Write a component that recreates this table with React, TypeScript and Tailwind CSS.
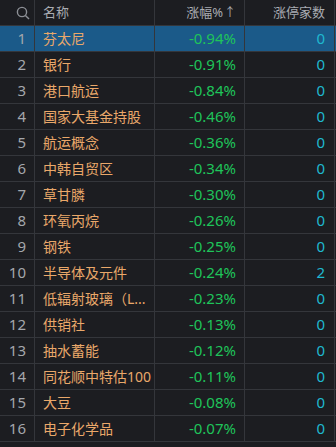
import React from "react";

const rows: [string, string, string][] = [
  ["芬太尼", "-0.94%", "0"],
  ["银行", "-0.91%", "0"],
  ["港口航运", "-0.84%", "0"],
  ["国家大基金持股", "-0.46%", "0"],
  ["航运概念", "-0.36%", "0"],
  ["中韩自贸区", "-0.34%", "0"],
  ["草甘膦", "-0.30%", "0"],
  ["环氧丙烷", "-0.26%", "0"],
  ["钢铁", "-0.25%", "0"],
  ["半导体及元件", "-0.24%", "2"],
  ["低辐射玻璃（L...", "-0.23%", "0"],
  ["供销社", "-0.13%", "0"],
  ["抽水蓄能", "-0.12%", "0"],
  ["同花顺中特估100", "-0.11%", "0"],
  ["大豆", "-0.08%", "0"],
  ["电子化学品", "-0.07%", "0"],
];

const cell = "h-full flex items-center border-r border-[#34363b]";

export default function App() {
  return (
    <div
      className="w-[336px] h-[447px] bg-[#1c1d21] overflow-hidden"
      style={{ fontFamily: '"Noto Sans", "Noto Sans CJK SC", sans-serif' }}
    >
      {/* header */}
      <div className="grid grid-cols-[35px_120px_90px_90px] h-[26px] border-b border-[#34363b] text-[13px] text-[#a9acb2]">
        <div className={`${cell} justify-end pr-[4px]`}>
          <svg width="14" height="14" viewBox="0 0 14 14" fill="none" stroke="#8d9096" strokeWidth="1.4">
            <circle cx="6" cy="6" r="4.6" />
            <path d="M9.4 9.4 L13 13" />
          </svg>
        </div>
        <div className={`${cell} pl-[8px]`}>名称</div>
        <div className={`${cell} justify-end pr-[8px]`}>
          涨幅%<span className="text-[12px] ml-[1px]">↑</span>
        </div>
        <div className={`${cell} justify-end pr-[9px]`}>涨停家数</div>
      </div>
      {rows.map(([name, pct, cnt], i) => (
        <div
          key={i}
          className={`grid grid-cols-[35px_120px_90px_90px] h-[26px] border-b border-[#34363b] ${
            i === 0 ? "bg-[#1b5a89]" : ""
          }`}
        >
          <div className={`${cell} justify-end pr-[8px] text-[15px] text-[#a4a7ac]`}>{i + 1}</div>
          <div className={`${cell} pl-[8px] text-[14px] text-[#eaa86a] whitespace-nowrap overflow-hidden`}>{name}</div>
          <div className={`${cell} justify-end pr-[8px] text-[15px] text-[#1fc45a]`}>{pct}</div>
          <div className={`${cell} justify-end pr-[9px] text-[15px] text-[#1fb8d0]`}>{cnt}</div>
        </div>
      ))}
    </div>
  );
}
